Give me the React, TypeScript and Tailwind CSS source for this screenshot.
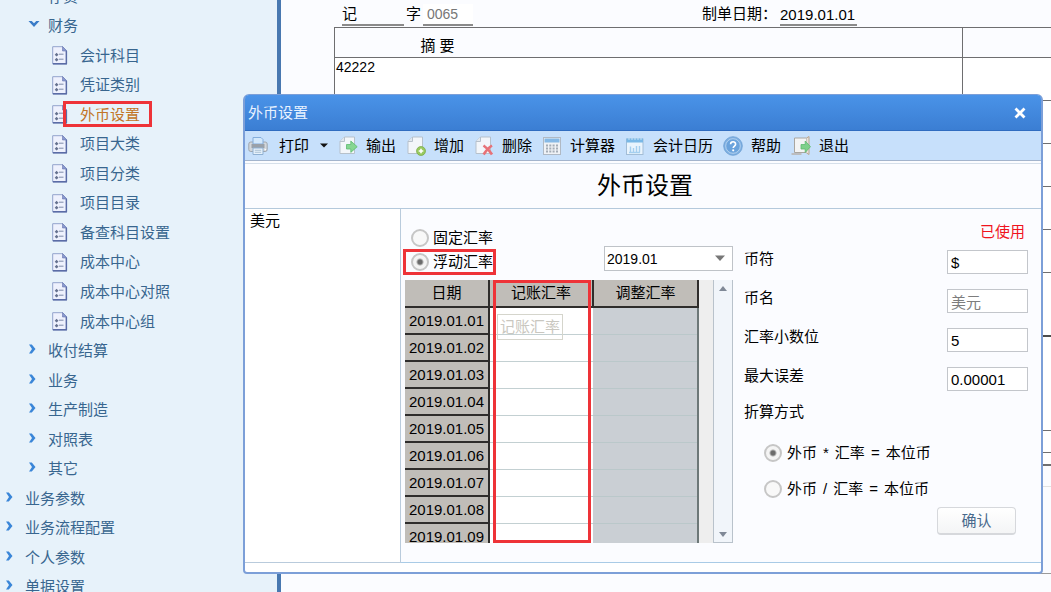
import { useState } from "react";
import type { ReactNode } from "react";

type NavNode = { label: string; kind: "open" | "closed" | "leaf"; level: 1 | 2 | 3; active?: boolean };

const nav: NavNode[] = [
  { label: "存货", kind: "closed", level: 2 },
  { label: "财务", kind: "open", level: 2 },
  { label: "会计科目", kind: "leaf", level: 3 },
  { label: "凭证类别", kind: "leaf", level: 3 },
  { label: "外币设置", kind: "leaf", level: 3, active: true },
  { label: "项目大类", kind: "leaf", level: 3 },
  { label: "项目分类", kind: "leaf", level: 3 },
  { label: "项目目录", kind: "leaf", level: 3 },
  { label: "备查科目设置", kind: "leaf", level: 3 },
  { label: "成本中心", kind: "leaf", level: 3 },
  { label: "成本中心对照", kind: "leaf", level: 3 },
  { label: "成本中心组", kind: "leaf", level: 3 },
  { label: "收付结算", kind: "closed", level: 2 },
  { label: "业务", kind: "closed", level: 2 },
  { label: "生产制造", kind: "closed", level: 2 },
  { label: "对照表", kind: "closed", level: 2 },
  { label: "其它", kind: "closed", level: 2 },
  { label: "业务参数", kind: "closed", level: 1 },
  { label: "业务流程配置", kind: "closed", level: 1 },
  { label: "个人参数", kind: "closed", level: 1 },
  { label: "单据设置", kind: "closed", level: 1 },
];

const indent = { 1: "pl-[5px]", 2: "pl-[28px]", 3: "pl-[52px]" };

function Chevron({ open }: { open: boolean }) {
  return open ? (
    <svg viewBox="0 0 12 8" className="-mt-1 h-2 w-3 shrink-0">
      <path d="M0.5 1h3.2L6 3.2 8.3 1h3.2L6 7z" fill="#3a7cc8" />
    </svg>
  ) : (
    <svg viewBox="0 0 12 12" className="-mt-1 h-3 w-3 shrink-0">
      <path d="M1 1.5h2.8l3.7 4.5-3.7 4.5H1L4 6z" fill="#3a86d8" />
    </svg>
  );
}

function SheetIcon() {
  return (
    <svg viewBox="0 0 16 19" className="h-[19px] w-4 shrink-0">
      <path d="M0.7 0.7h10l4 4.3v13H0.7z" fill="#eef1fd" stroke="#93a3cc" />
      <path d="M14.3 5v12.8H1" fill="none" stroke="#5b6ca6" strokeWidth="1.4" />
      <path d="M10.5 0.5V5h4.3z" fill="#8c9bd0" stroke="#6676b0" strokeWidth="0.6" />
      <path d="M4.6 6.8l1.9 1.9-1.9 1.9-1.9-1.9zM4.6 11.8l1.9 1.9-1.9 1.9-1.9-1.9z" fill="#66728f" />
      <path d="M7 8.2h4.5M7 13.2h4.5" stroke="#7d8aa8" strokeWidth="1" />
    </svg>
  );
}

function Sidebar() {
  return (
    <nav className="h-screen w-[281px] shrink-0 overflow-hidden border-r-4 border-[#4878b0] bg-[#e7f2fa]">
      <ul className="-mt-[18px] grid h-[620px] auto-rows-fr">
        {nav.map((n) => (
          <li key={n.label} className="flex">
            <a
              href="#"
              className={`relative flex items-center ${indent[n.level]} ${
                n.level === 3 ? "gap-3" : "gap-2"
              } ${n.active ? "text-[#c27527]" : "text-[#38668f]"}`}
            >
              {n.kind === "leaf" ? <SheetIcon /> : <Chevron open={n.kind === "open"} />}
              <span>{n.label}</span>
              {n.active && <span className="absolute top-[1px] -right-3 left-[63px] h-[26px] border-[3px] border-[#ee3338]" />}
            </a>
          </li>
        ))}
      </ul>
    </nav>
  );
}

function Voucher() {
  return (
    <main className="min-w-0 flex-1 bg-[#fbfcff] pl-[53px]">
      <header className="flex h-[27px] items-end pb-px text-black">
        <label className="ml-2 flex items-end gap-[2px]">
          <span className="flex h-[22px] w-[62px] border-b-2 border-[#8a8a8a] leading-[20px]">记</span>
          <span className="h-[22px] leading-[20px]">字</span>
          <input
            readOnly
            defaultValue="0065"
            className="h-[22px] w-[50px] border-b-2 border-[#8a8a8a] bg-white pl-1 text-sm text-[#777] outline-none"
          />
        </label>
        <label className="ml-[229px] flex items-end">
          <span className="h-[22px] w-[78px] leading-[20px] whitespace-nowrap">制单日期：</span>
          <input
            readOnly
            defaultValue="2019.01.01"
            className="h-[22px] w-[77px] border-b-2 border-[#8a8a8a] bg-transparent outline-none"
          />
        </label>
      </header>
      <table className="w-full table-fixed border-collapse border border-r-0 border-[#6e6e70]">
        <thead>
          <tr className="h-[30px]">
            <th className="w-[628px] border border-[#6e6e70] pt-[6px] pr-[422px] pb-0 text-center font-normal">摘 要</th>
            <th className="border-y border-[#6e6e70]" />
          </tr>
        </thead>
        <tbody className="bg-white">
          {["42222", "", "", "", ""].map((t, i) => (
            <tr key={i} className="h-[43px] align-top">
              <td className="border border-[#6e6e70] px-px py-0 text-sm leading-[18px]">{t}</td>
              <td className="border-y border-[#6e6e70]" />
            </tr>
          ))}
        </tbody>
      </table>
      <div className="h-[64px] border-b-2 border-[#4c4c4c] bg-white" />
      <div className="h-[94px] border-b border-[#6e6e70] bg-white" />
      <div className="h-[22px] border-b border-[#6e6e70] bg-white" />
      <div className="h-[13px] border-b-2 border-[#6e6e70] bg-white" />
      <div className="h-[21px] border-b border-[#e2e2e2]" />
      <div className="h-[87px] border-b border-[#9a9a9a]" />
    </main>
  );
}

const svg = "h-5 w-5 shrink-0";

const PrintIcon = () => (
  <svg viewBox="0 0 20 20" className={svg}>
    <rect x="0.8" y="6" width="18.4" height="9.5" rx="2" fill="#d3d7db" stroke="#9ea5ad" />
    <path d="M5 8V1.5h8l2 2V8z" fill="#d3e8fb" stroke="#84addb" />
    <rect x="3.5" y="8" width="13" height="4" fill="#9aa1a9" />
    <circle cx="17.3" cy="13.6" r="0.8" fill="#fff" />
    <path d="M5 12h10v6.5H5z" fill="#e6f1fb" stroke="#8fb0d2" />
    <path d="M6.8 14.3h6.4M6.8 16.3h6.4" stroke="#9db6cc" strokeWidth="0.8" />
  </svg>
);

const Page = () => (
  <>
    <path d="M6.5 1h10v16.5H2V5.5z" fill="#f3f6fa" stroke="#b7c1cb" />
    <path d="M6.5 1v4.5H2" fill="#e2e8ee" stroke="#b7c1cb" />
  </>
);

const ExportIcon = () => (
  <svg viewBox="0 0 20 20" className={svg}>
    <Page />
    <path d="M8.5 8.5h4.3V5l6.4 5.7-6.4 5.7V13H8.5z" fill="#86d692" stroke="#5dba70" strokeWidth="0.8" />
  </svg>
);

const AddIcon = () => (
  <svg viewBox="0 0 20 20" className={svg}>
    <Page />
    <circle cx="15" cy="15" r="4.5" fill="#98c960" stroke="#77a945" strokeWidth="0.7" />
    <path d="M15 12.7v4.6M12.7 15h4.6" stroke="#fff" strokeWidth="1.6" />
  </svg>
);

const DeleteIcon = () => (
  <svg viewBox="0 0 20 20" className={svg}>
    <Page />
    <path d="M9.5 9.5c3 2 6 5 8.5 9M18 9.5c-3 1.8-6 5-8.4 9" stroke="#e77278" strokeWidth="2.6" fill="none" />
  </svg>
);

const CalculatorIcon = () => (
  <svg viewBox="0 0 20 20" className={svg}>
    <rect x="1.5" y="1.5" width="17" height="17" fill="#eff2f6" stroke="#b0b9c4" />
    <rect x="2.5" y="2.5" width="15" height="4" fill="#86b9e6" />
    <path d="M5 8.5v8.5M8.3 8.5v8.5M11.6 8.5v8.5M15 8.5v8.5" stroke="#a4acb6" strokeWidth="2" strokeDasharray="2 1" />
  </svg>
);

const CalendarIcon = () => (
  <svg viewBox="0 0 20 20" className={svg}>
    <rect x="1.5" y="3" width="16.5" height="15.5" fill="#e9f4fd" stroke="#a3bdd6" />
    <rect x="1.5" y="2.5" width="16.5" height="4" fill="#79b8e6" />
    <path d="M4 1v3M7 1v3M10 1v3M13 1v3M16 1v3" stroke="#c9e2f6" />
    <path d="M5.5 10.5v6M8.5 12v4.5M11.5 10v6.5M14.5 10v6.5M4 16.5h11" stroke="#a5cfef" strokeWidth="1.4" />
  </svg>
);

const HelpIcon = () => (
  <svg viewBox="0 0 20 20" className={svg}>
    <circle cx="10" cy="10" r="9.3" fill="#7fb0e2" stroke="#6a9dd2" strokeWidth="0.8" />
    <circle cx="10" cy="10" r="7.3" fill="#6ba3dc" stroke="#b9d5ef" strokeWidth="0.9" />
    <path d="M7.6 8.2c0-3.2 5-3.2 5 0 0 1.8-2.4 1.9-2.4 3.9" fill="none" stroke="#fff" strokeWidth="1.6" />
    <circle cx="10.2" cy="14.3" r="1.1" fill="#fff" />
  </svg>
);

const ExitIcon = () => (
  <svg viewBox="0 0 20 20" className={svg}>
    <path d="M3.5 2h12v14.5h-12z" fill="#f3f4f4" stroke="#a9a6a0" />
    <path d="M15.5 2l2.5-1.5v18L15.5 17" stroke="#b9a48f" fill="#e6e2dc" />
    <path d="M0.5 18h10" stroke="#b09a84" />
    <path d="M10 8.5h4.2V5l5.3 5.7-5.3 5.7V13H10z" fill="#7ed08a" stroke="#5dba70" strokeWidth="0.8" />
  </svg>
);

function Tool({ icon, children }: { icon: ReactNode; children: ReactNode }) {
  return (
    <button type="button" className="flex items-center gap-2 whitespace-nowrap">
      {icon}
      <span>{children}</span>
    </button>
  );
}

const radioClass =
  "h-[18px] w-[18px] shrink-0 appearance-none rounded-full border-2 border-[#c6c6c6] bg-[#f8f8f8] checked:bg-[radial-gradient(circle,#6b6b6b_0_2px,#f4f4f4_4px)]";

const days = ["01", "02", "03", "04", "05", "06", "07", "08", "09"];

function RateTable() {
  return (
    <div className="relative mt-[5px] flex h-[263px] w-[328px] overflow-hidden">
      <table className="w-[294px] shrink-0 table-fixed border-collapse self-start">
        <thead>
          <tr className="h-[27px] bg-[#c0bdb8]">
            <th className="w-[84px] border-r-2 border-b-2 border-[#2f2d2b] p-0 font-normal">日期</th>
            <th className="w-[104px] border-r-2 border-b-2 border-[#2f2d2b] p-0 font-normal">记账汇率</th>
            <th className="border-r-2 border-b-2 border-[#2f2d2b] p-0 font-normal">调整汇率</th>
          </tr>
        </thead>
        <tbody>
          {days.map((d) => (
            <tr key={d} className="h-[27px]">
              <td className="border-r-2 border-b-2 border-[#2f2d2b] bg-[#c0bdb8] p-0 text-center leading-[18px]">
                2019.01.{d}
              </td>
              <td className="border-b border-[#c3d0d2] bg-white p-0" />
              <td className="border-r-2 border-b border-r-[#6d7878] border-b-[#bac8ca] bg-[#cacfd4] p-0" />
            </tr>
          ))}
        </tbody>
      </table>
      <div className="flex-1 bg-[#eeeeee]" />
      <div className="flex w-5 flex-col justify-between border-x border-b border-[#b9c2cb] bg-[#f1f5fa]">
        <button type="button" aria-label="向上滚动" className="flex h-4 items-center justify-center">
          <svg viewBox="0 0 8 5" className="h-[5px] w-2">
            <path d="M0 5L4 0l4 5z" fill="#7f8896" />
          </svg>
        </button>
        <button type="button" aria-label="向下滚动" className="flex h-4 items-center justify-center">
          <svg viewBox="0 0 8 5" className="h-[5px] w-2">
            <path d="M0 0l4 5 4-5z" fill="#7f8896" />
          </svg>
        </button>
      </div>
      <span className="absolute top-[34px] left-[92px] border border-[#d5d5cc] px-[2px] leading-[24px] text-[#c9c7c0]">
        记账汇率
      </span>
      <span className="absolute inset-y-0 left-[88px] w-[98px] border-[3px] border-[#ee3338]" />
    </div>
  );
}

const fields = [
  { id: "symbol", label: "币符", value: "$" },
  { id: "name", label: "币名", value: "美元", muted: true },
  { id: "digits", label: "汇率小数位", value: "5" },
  { id: "error", label: "最大误差", value: "0.00001" },
];

function Dialog() {
  const [rateType, setRateType] = useState("float");
  const [method, setMethod] = useState("multiply");
  return (
    <section
      role="dialog"
      aria-label="外币设置"
      className="absolute top-[94px] right-[8px] left-[243px] rounded-t-md rounded-b border-2 border-t border-[#7c9fd8] bg-[#fbfcff] text-black"
    >
      <header className="flex h-9 items-center justify-between rounded-t-[4px] border-b border-[#2f6cc0] bg-linear-to-b from-[#4a93e8] to-[#3b7ed3] pr-[15px] pl-[3px] text-[#e8f2ff]">
        <span>外币设置</span>
        <button type="button" aria-label="关闭" className="flex h-4 w-3 items-center justify-center">
          <svg viewBox="0 0 12 12" className="h-3 w-3">
            <path d="M1.5 1.5l9 9M10.5 1.5l-9 9" stroke="#fff" strokeWidth="2.8" />
          </svg>
        </button>
      </header>
      <div className="flex h-[30px] items-center gap-[10px] border-b border-[#a3b4cc] bg-[#c7e0fb] pl-[3px]">
        <button type="button" className="flex items-center gap-[11px] whitespace-nowrap">
          <PrintIcon />
          <span>打印</span>
          <svg viewBox="0 0 8 5" className="h-[5px] w-2">
            <path d="M0 0.5h8L4 4.5z" fill="#111" />
          </svg>
        </button>
        <Tool icon={<ExportIcon />}>输出</Tool>
        <Tool icon={<AddIcon />}>增加</Tool>
        <Tool icon={<DeleteIcon />}>删除</Tool>
        <Tool icon={<CalculatorIcon />}>计算器</Tool>
        <Tool icon={<CalendarIcon />}>会计日历</Tool>
        <Tool icon={<HelpIcon />}>帮助</Tool>
        <Tool icon={<ExitIcon />}>退出</Tool>
      </div>
      <h1 className="mt-[2px] flex h-[46px] items-center justify-center border-t border-b border-t-[#d5dfea] border-b-[#b4c9dc] pl-1 text-2xl">
        外币设置
      </h1>
      <div className="flex h-[354px]">
        <ul className="w-[156px] shrink-0 border-r border-b border-[#b9cbdc] bg-white pt-[3px] pl-[5px]">
          <li className="leading-[18px]">美元</li>
        </ul>
        <div className="flex min-w-0 flex-1 border-b border-[#a9cbe6] pl-1">
          <div className="pt-5">
            <div className="flex w-[328px] items-end justify-between">
              <div>
                <label className="flex h-[18px] items-center gap-1 pl-[6px]">
                  <input
                    type="radio"
                    name="rate"
                    className={radioClass}
                    checked={rateType === "fixed"}
                    onChange={() => setRateType("fixed")}
                  />
                  固定汇率
                </label>
                <label className="mt-[2px] -ml-[2px] flex h-[26px] items-center gap-1 border-[3px] border-[#ee3338] pr-0 pl-[5px]">
                  <input
                    type="radio"
                    name="rate"
                    className={radioClass}
                    checked={rateType === "float"}
                    onChange={() => setRateType("float")}
                  />
                  浮动汇率
                </label>
              </div>
              <div className="relative mb-1">
                <select
                  aria-label="期间"
                  className="h-[25px] w-[129px] appearance-none border border-[#bfc3c8] bg-white pl-[2px] text-sm outline-none"
                >
                  <option>2019.01</option>
                </select>
                <svg viewBox="0 0 10 6" className="pointer-events-none absolute top-[9px] right-2 h-[6px] w-[10px]">
                  <path d="M0 0.5h10L5 6z" fill="#777" />
                </svg>
              </div>
            </div>
            <RateTable />
          </div>
          <form className="flex min-w-0 flex-1 flex-col pt-[14px] pr-[13px] pl-[11px]" onSubmit={(e) => e.preventDefault()}>
            <p className="pr-[3px] text-right leading-[18px] text-[#f0141e]">已使用</p>
            <div className="mt-[9px] flex flex-col gap-[15px]">
              {fields.map((f) => (
                <div key={f.id} className="flex items-start justify-between">
                  <label htmlFor={f.id} className="leading-[18px]">
                    {f.label}
                  </label>
                  <input
                    id={f.id}
                    defaultValue={f.value}
                    className={`h-6 w-[81px] border border-[#c3c6cb] bg-white pl-[3px] outline-none ${
                      f.muted ? "text-[#7d7d7d]" : "text-black"
                    }`}
                  />
                </div>
              ))}
            </div>
            <fieldset className="mt-3">
              <legend className="leading-[18px]">折算方式</legend>
              <label className="mt-[23px] ml-5 flex h-[18px] items-center gap-[5px]">
                <input
                  type="radio"
                  name="method"
                  className={radioClass}
                  checked={method === "multiply"}
                  onChange={() => setMethod("multiply")}
                />
                <span className="flex gap-[6px]">
                  <span>外币</span>
                  <span>*</span>
                  <span>汇率</span>
                  <span>=</span>
                  <span>本位币</span>
                </span>
              </label>
              <label className="mt-[18px] ml-5 flex h-[18px] items-center gap-[5px]">
                <input
                  type="radio"
                  name="method"
                  className={radioClass}
                  checked={method === "divide"}
                  onChange={() => setMethod("divide")}
                />
                <span className="flex gap-[6px]">
                  <span>外币</span>
                  <span>/</span>
                  <span>汇率</span>
                  <span>=</span>
                  <span>本位币</span>
                </span>
              </label>
            </fieldset>
            <button
              type="submit"
              className="mt-[9px] mr-3 h-7 w-[79px] self-end rounded-[4px] border border-b-2 border-[#d6d8dc] bg-linear-to-b from-white to-[#f4f5f6] text-[#48698c]"
            >
              确认
            </button>
          </form>
        </div>
      </div>
      <div className="h-[9px] rounded-b bg-white" />
    </section>
  );
}

export default function App() {
  return (
    <div className="relative flex h-screen overflow-hidden font-['Liberation_Sans','Noto_Sans_CJK_SC',sans-serif] text-[15px] leading-[20px]">
      <Sidebar />
      <Voucher />
      <Dialog />
    </div>
  );
}
